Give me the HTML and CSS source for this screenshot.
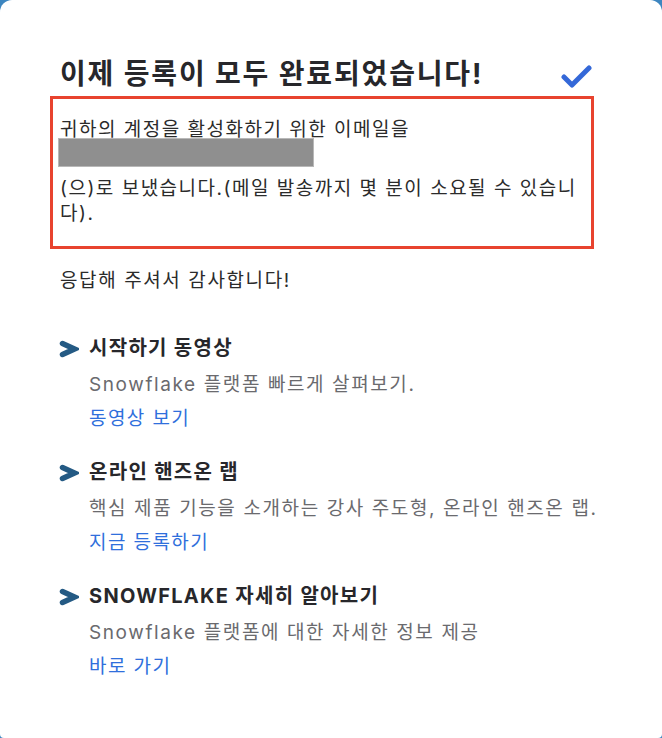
FILE: index.html
```html
<!DOCTYPE html>
<html lang="ko">
<head>
<meta charset="utf-8">
<title>등록 완료</title>
<link rel="stylesheet" href="styles.css">
</head>
<body>
<div class="card">
<div class="head">
<h1>이제 등록이 모두 완료되었습니다!</h1>
<svg class="check" width="34" height="26" viewBox="0 0 34 26"><polyline points="4,12 12,20 29,3" fill="none" stroke="#3468d8" stroke-width="5" stroke-linecap="round" stroke-linejoin="round"/></svg>
</div>
<div class="notice">
<p>귀하의 계정을 활성화하기 위한 이메일을</p>
<span class="email"></span>
<p>(으)로 보냈습니다.(메일 발송까지 몇 분이 소요될 수 있습니<br>다).</p>
</div>
<p class="thanks">응답해 주셔서 감사합니다!</p>
<ul class="steps">
<li>
<svg class="chev" width="20" height="18" viewBox="0 0 20 18"><polyline points="3.5,3.5 15.5,9 3.5,14.5" fill="none" stroke="#245a84" stroke-width="5.5" stroke-linecap="round" stroke-linejoin="miter"/></svg>
<div>
<h2>시작하기 동영상</h2>
<p class="desc">Snowflake 플랫폼 빠르게 살펴보기.</p>
<a href="#">동영상 보기</a>
</div>
</li>
<li>
<svg class="chev" width="20" height="18" viewBox="0 0 20 18"><polyline points="3.5,3.5 15.5,9 3.5,14.5" fill="none" stroke="#245a84" stroke-width="5.5" stroke-linecap="round" stroke-linejoin="miter"/></svg>
<div>
<h2>온라인 핸즈온 랩</h2>
<p class="desc">핵심 제품 기능을 소개하는 강사 주도형, 온라인 핸즈온 랩.</p>
<a href="#">지금 등록하기</a>
</div>
</li>
<li>
<svg class="chev" width="20" height="18" viewBox="0 0 20 18"><polyline points="3.5,3.5 15.5,9 3.5,14.5" fill="none" stroke="#245a84" stroke-width="5.5" stroke-linecap="round" stroke-linejoin="miter"/></svg>
<div>
<h2>SNOWFLAKE 자세히 알아보기</h2>
<p class="desc">Snowflake 플랫폼에 대한 자세한 정보 제공</p>
<a href="#">바로 가기</a>
</div>
</li>
</ul>
</div>
</body>
</html>
```

FILE: styles.css
```css
html,body{margin:0;padding:0;}
body{background:#3d86c0;font-family:Inter,"Noto Sans CJK KR",sans-serif;color:#2a2a2e;}
.card{box-sizing:border-box;width:662px;height:738px;background:#fff;border-radius:12px 12px 4px 4px;padding:56px 50px 0 50px;}
.head{display:flex;justify-content:space-between;align-items:flex-start;padding:0 18px 0 10px;height:40px;}
.head h1{margin:0;font-size:28px;line-height:36px;font-weight:700;letter-spacing:1.85px;color:#27272b;}
.check{margin-top:9px;}
.notice{margin-right:18px;border:3px solid #e8432e;padding:18px 7px 20px;font-size:19px;line-height:25px;letter-spacing:1.5px;color:#2b2b2b;}
.notice p{margin:0;}
.email{display:block;width:254px;height:27px;margin:-4px 0 9px -2px;background:#8f8f8f;border:1px solid #b8b8b8;}
.thanks{margin:19px 0 0 10px;font-size:19px;line-height:25px;letter-spacing:1.6px;color:#2b2b2b;}
.steps{list-style:none;margin:43px 0 0 10px;padding:0;}
.steps li{display:flex;gap:10px;margin-bottom:29px;}
.chev{flex:none;margin-top:4px;margin-left:-1px;}
.steps h2{margin:0;font-size:20px;line-height:25px;font-weight:700;letter-spacing:1.3px;color:#27272b;}
.desc{margin:11px 0 0;font-size:19px;line-height:25px;letter-spacing:1.6px;color:#6a6a6e;}
.steps a{display:block;margin-top:9px;font-size:19px;line-height:25px;letter-spacing:1.4px;color:#2f6fdc;text-decoration:none;}
```
